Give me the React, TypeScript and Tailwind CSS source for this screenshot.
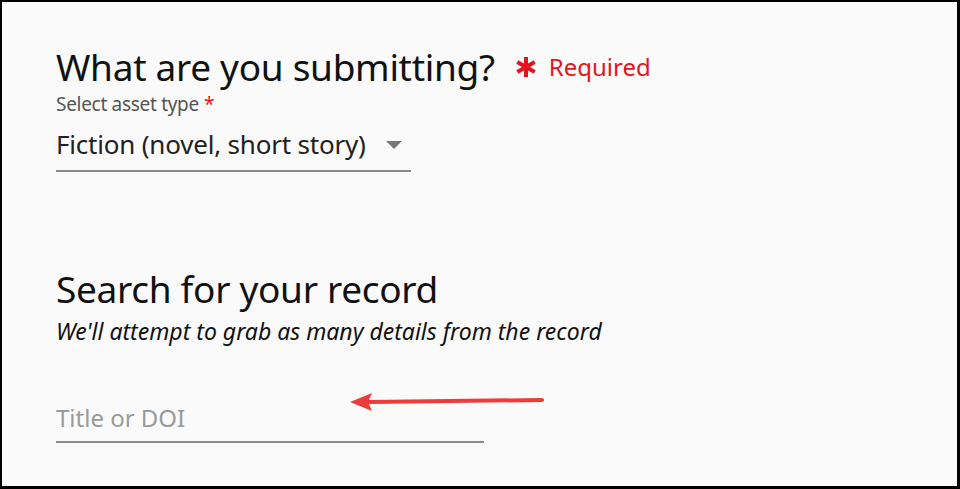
export default function App() {
  return (
    <div
      className="relative h-[489px] w-[960px] overflow-hidden border-t-[2px] border-l-[2px] border-r-[3px] border-b-[3px] border-black bg-[#fafafa] text-[#111]"
      style={{ fontFamily: '"Noto Sans", "Open Sans", sans-serif' }}
    >
      <div className="flex flex-col pl-[54px] pt-[42px]">
        <div className="flex items-center">
          <h1 className="text-[37px] leading-[46px] tracking-[-0.3px]">What are you submitting?</h1>
          <span className="ml-[20px] flex items-center text-[24px] leading-[30px] text-[#e3151a]">
            <svg className="mr-[12px]" width="22" height="22" viewBox="0 0 22 22">
              <g stroke="#e3151a" strokeWidth="4" strokeLinecap="butt">
                <path d="M11 1 L11 21" />
                <path d="M2.3 6 L19.7 16" />
                <path d="M2.3 16 L19.7 6" />
              </g>
            </svg>
            Required
          </span>
        </div>

        <label className="mt-[3px] flex items-baseline gap-[5px] text-[19px] leading-[22px] tracking-[-0.3px] text-[#555]">
          <span>Select asset type</span>
          <span className="text-[19px] leading-none text-[#e3151a]">*</span>
        </label>

        <div className="mt-[13px] flex w-[355px] items-center border-b-[2px] border-[#8a8a8a] pb-[10px]">
          <span className="text-[26px] leading-[32px] tracking-[-0.2px] text-[#222]">Fiction (novel, short story)</span>
          <svg className="ml-[20px] mt-[2px]" width="16" height="8" viewBox="0 0 16 8">
            <path d="M0 0 L16 0 L8 8 Z" fill="#777" />
          </svg>
        </div>

        <h2 className="mt-[93px] text-[37px] leading-[48px] tracking-[-0.3px]">Search for your record</h2>
        <p className="mt-[3px] text-[23px] italic leading-[30px] text-[#111]">
          We'll attempt to grab as many details from the record
        </p>

        <div className="mt-[56px] w-[428px] border-b-[2px] border-[#8a8a8a] pb-[7px]">
          <span className="text-[24px] leading-[32px] text-[#9a9a9a]">Title or DOI</span>
        </div>
      </div>

      <svg className="absolute left-[346px] top-[389px]" width="196" height="22" viewBox="0 0 196 22">
        <path d="M20 11 L194 9" stroke="#ee3b3b" strokeWidth="4" strokeLinecap="round" />
        <path d="M2 11 L24 2 L20 11 L24 20 Z" fill="#ee3b3b" />
      </svg>
    </div>
  )
}
